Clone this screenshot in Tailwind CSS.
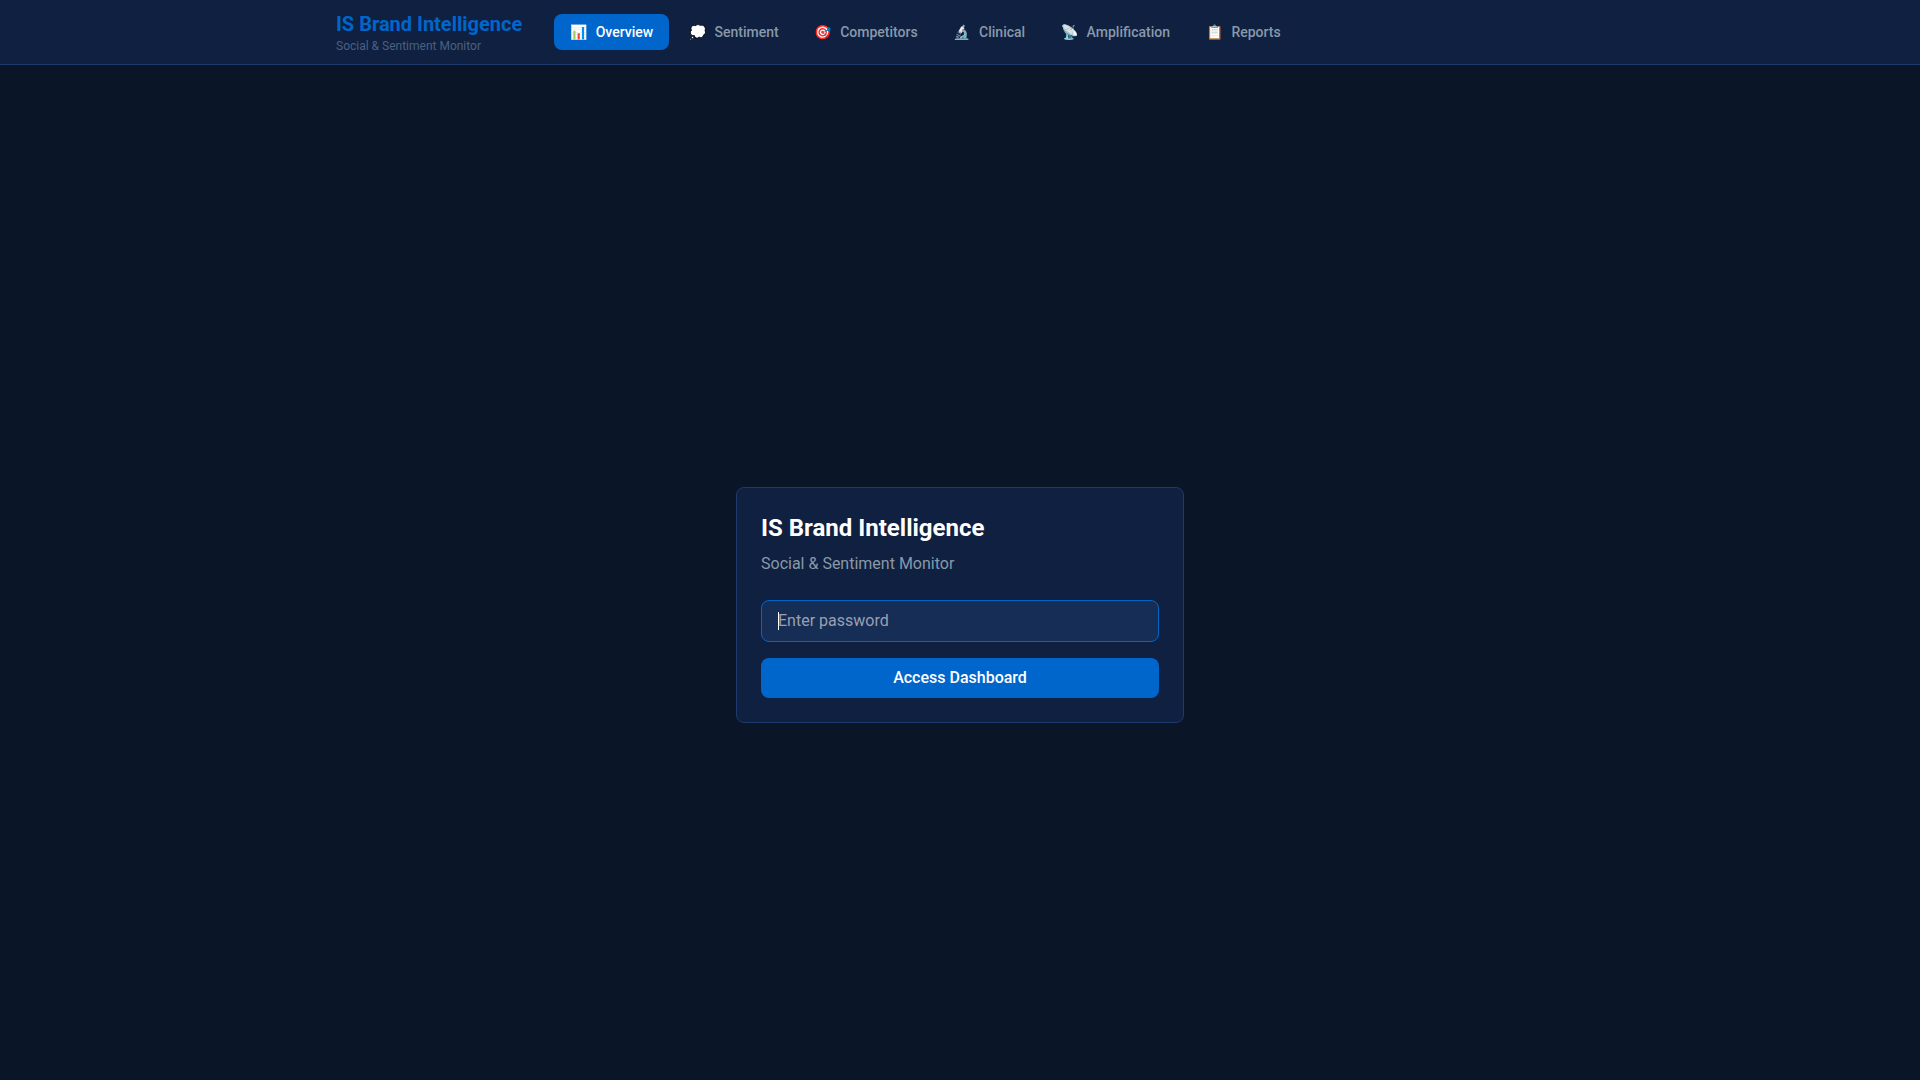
<!DOCTYPE html>
<html lang="en">
<head>
    <meta charset="UTF-8">
    <meta name="viewport" content="width=device-width, initial-scale=1.0">
    <title>IS Brand Intelligence</title>
    <script src="https://cdn.jsdelivr.net/npm/@tailwindcss/browser@4"></script>
</head>
<body class="min-h-screen bg-[#0a1628] text-white font-[-apple-system,BlinkMacSystemFont,'Segoe_UI',Roboto,'Noto_Color_Emoji',sans-serif]">
    <nav class="bg-[#0f2040] border-b border-[#1e3a6e]">
        <div class="max-w-7xl mx-auto px-4">
            <div class="flex items-center h-16 gap-8">
                <div>
                    <div class="text-xl font-bold text-[#0066cc]">IS Brand Intelligence</div>
                    <div class="text-xs text-[#4a6080]">Social &amp; Sentiment Monitor</div>
                </div>
                <div class="flex gap-1">
                    <a href="/" class="px-4 py-2 rounded-lg text-sm font-medium bg-[#0066cc] text-white"><span class="mr-2">📊</span>Overview</a>
                    <a href="/sentiment" class="px-4 py-2 rounded-lg text-sm font-medium text-[#8899aa]"><span class="mr-2">💭</span>Sentiment</a>
                    <a href="/competitors" class="px-4 py-2 rounded-lg text-sm font-medium text-[#8899aa]"><span class="mr-2">🎯</span>Competitors</a>
                    <a href="/clinical" class="px-4 py-2 rounded-lg text-sm font-medium text-[#8899aa]"><span class="mr-2">🔬</span>Clinical</a>
                    <a href="/amplification" class="px-4 py-2 rounded-lg text-sm font-medium text-[#8899aa]"><span class="mr-2">📡</span>Amplification</a>
                    <a href="/reports" class="px-4 py-2 rounded-lg text-sm font-medium text-[#8899aa]"><span class="mr-2">📋</span>Reports</a>
                </div>
            </div>
        </div>
    </nav>

    <main class="max-w-7xl mx-auto px-4">
        <div class="min-h-screen flex items-center justify-center">
            <form class="w-full max-w-md p-6 bg-[#0f2040] border border-[#1e3a6e] rounded-lg">
                <h1 class="text-2xl font-bold mb-2">IS Brand Intelligence</h1>
                <p class="text-[#8899aa] mb-6">Social &amp; Sentiment Monitor</p>
                <div class="relative mb-4">
                    <input
                        type="password"
                        aria-label="Password"
                        placeholder="Enter password"
                        autofocus
                        class="block w-full px-4 py-2 bg-[#162d56] border border-[#0066cc] rounded-lg text-white caret-transparent placeholder-gray-400 focus:outline-none"
                    />
                    <!-- caret -->
                    <span class="absolute left-4 inset-y-3 w-px ml-px bg-white pointer-events-none"></span>
                </div>
                <button type="submit" class="w-full py-2 bg-[#0066cc] rounded-lg font-medium text-white">Access Dashboard</button>
            </form>
        </div>
    </main>
</body>
</html>
